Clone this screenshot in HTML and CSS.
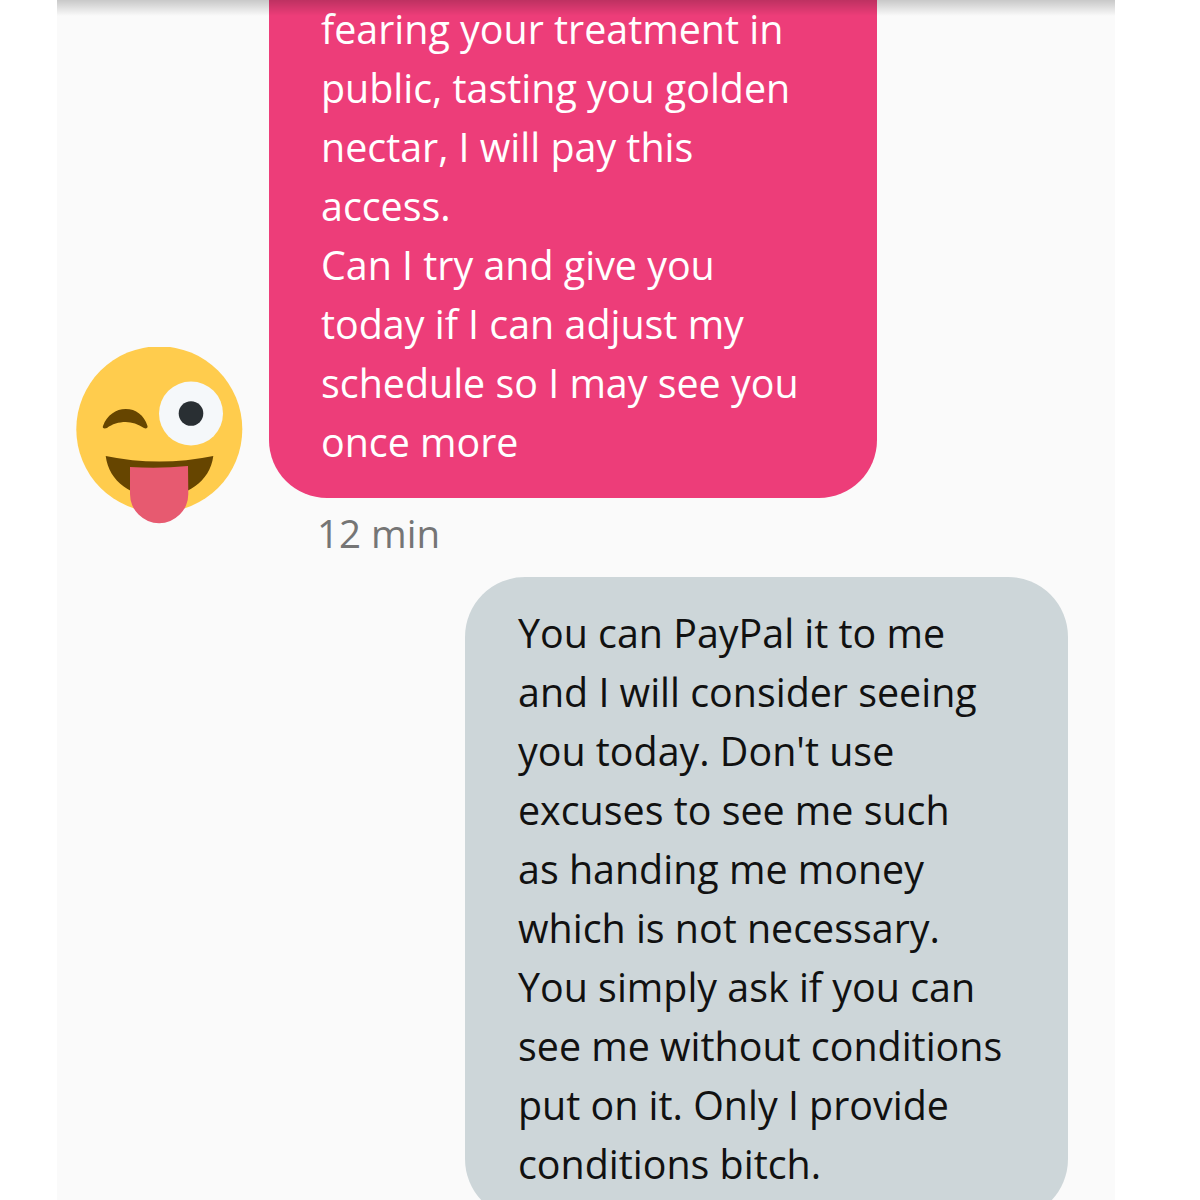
FILE: index.html
```html
<!DOCTYPE html>
<html lang="en">
<head>
  <meta charset="utf-8" />
  <title>Messages</title>
  <link rel="stylesheet" href="styles.css">
</head>
<body>
  <div class="screen">
    <div class="top-shade"></div>

    <div class="row-in">
      <svg class="avatar" viewBox="0 0 168 178" width="168" height="178">
        <circle cx="83.3" cy="82.3" r="83" fill="#ffcc4d" />
        <circle cx="115" cy="66.5" r="32" fill="#f5f8fa" />
        <circle cx="115" cy="66.5" r="12.3" fill="#292f33" />
        <path d="M27 79C31 68 40 62 49.7 62C60 62 68 68 71.5 79C72 81 70 82 68 81C62 77 56 75 49.7 75C43 75 36 77 31 81C28 82 26 81 27 79Z" fill="#664500" />
        <path d="M29.7 109Q83 120 137.3 109C134 135 110 150 83 150C56 150 33 135 29.7 109Z" fill="#664500" />
        <path d="M54 120Q83 122 112 119L112.3 147A29 29 0 0 1 54 147Z" fill="#e75a70" />
      </svg>
      <div class="msg-in">
        <div class="bubble bubble-pink">fearing your treatment in<br>public, tasting you golden<br>nectar, I will pay this<br>access.<br>Can I try and give you<br>today if I can adjust my<br>schedule so I may see you<br>once more</div>
        <div class="time">12 min</div>
      </div>
    </div>

    <div class="row-out">
      <div class="bubble bubble-gray">You can PayPal it to me<br>and I will consider seeing<br>you today. Don't use<br>excuses to see me such<br>as handing me money<br>which is not necessary.<br>You simply ask if you can<br>see me without conditions<br>put on it. Only I provide<br>conditions bitch.</div>
    </div>
  </div>
</body>
</html>
```

FILE: styles.css
```css
html, body {
  margin: 0;
  padding: 0;
  height: 1200px;
  overflow: hidden;
  background-color: #fff;
}
.screen {
  position: relative;
  width: 1058px;
  height: 1200px;
  margin-left: 57px;
  overflow: hidden;
  background-color: #fafafa;
  font-family: "Open Sans", "Noto Sans", sans-serif;
}
.top-shade {
  position: absolute;
  top: 0;
  left: 0;
  right: 0;
  height: 16px;
  background: linear-gradient(rgba(0, 0, 0, 0.2), rgba(0, 0, 0, 0));
}
.row-in {
  display: flex;
  align-items: flex-start;
}
.avatar {
  flex: none;
  margin: 347px 0 0 19px;
}
.msg-in {
  margin-left: 25px;
  width: 608px;
}
.bubble {
  box-sizing: border-box;
  font-size: 39.4px;
  line-height: 59px;
  white-space: nowrap;
}
.bubble-pink {
  padding: 0 0 26px 52px;
  color: #fff;
  background-color: #ed3d79;
  border-radius: 0 0 58px 58px;
}
.time {
  margin: 13px 0 0 48px;
  font-size: 38.5px;
  line-height: 44px;
  color: #757575;
}
.row-out {
  display: flex;
  justify-content: flex-end;
  margin: 22px 47px 0 0;
}
.bubble-gray {
  width: 603px;
  padding: 27px 0 25px 53px;
  color: #111;
  background-color: #cdd6d9;
  border-radius: 60px;
}
```
